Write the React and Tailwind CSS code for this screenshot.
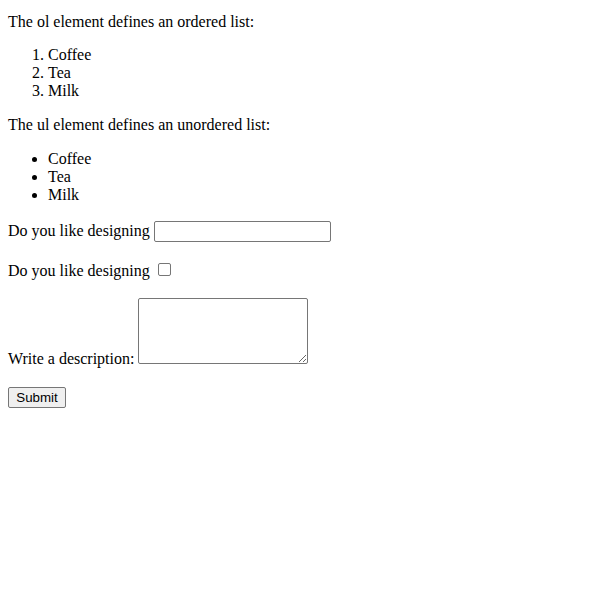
export default function App() {
  return (
    <div className="min-h-[603px] bg-white px-2 pt-[13px] font-['Liberation_Serif',serif] text-[16px] leading-[18px] text-black">
      <p>The ol element defines an ordered list:</p>
      <ol className="mt-[15px] list-decimal pl-10">
        <li>Coffee</li>
        <li>Tea</li>
        <li>Milk</li>
      </ol>
      <p className="mt-4">The ul element defines an unordered list:</p>
      <ul className="mt-4 list-disc pl-10">
        <li>Coffee</li>
        <li>Tea</li>
        <li>Milk</li>
      </ul>
      <form onSubmit={(e) => e.preventDefault()}>
        <div className="mt-[17px]">
          <label>Do you like designing</label>{" "}
          <input
            type="text"
            className="box-border h-[21px] w-[177px] rounded-[2px] border border-[#767676] bg-white px-[2px] py-0 align-baseline font-['Liberation_Sans',sans-serif] text-[13.333px] leading-[normal] outline-none"
          />
        </div>
        <div className="mt-[18px]">
          <label>Do you like designing</label>{" "}
          <input
            type="checkbox"
            className="mb-0 ml-[4px] mr-[3px] mt-[3px] box-border inline-block h-[13px] w-[13px] appearance-none rounded-[2px] border border-[#767676] bg-white align-baseline"
          />
        </div>
        <div className="mt-[18px]">
          <label>Write a description:</label>{" "}
          <textarea className="box-border h-[66px] w-[170px] resize rounded-[2px] border border-[#767676] bg-white p-[2px] align-baseline font-['Liberation_Mono',monospace] text-[13.333px] leading-[normal] outline-none" />
        </div>
        <div className="mt-[19px]">
          <button
            type="submit"
            className="box-border h-[21px] w-[58px] rounded-[2px] border border-[#767676] bg-[#efefef] px-[6px] py-0 align-baseline font-['Liberation_Sans',sans-serif] text-[13.333px] leading-[normal] text-black"
          >
            Submit
          </button>
        </div>
      </form>
    </div>
  );
}
